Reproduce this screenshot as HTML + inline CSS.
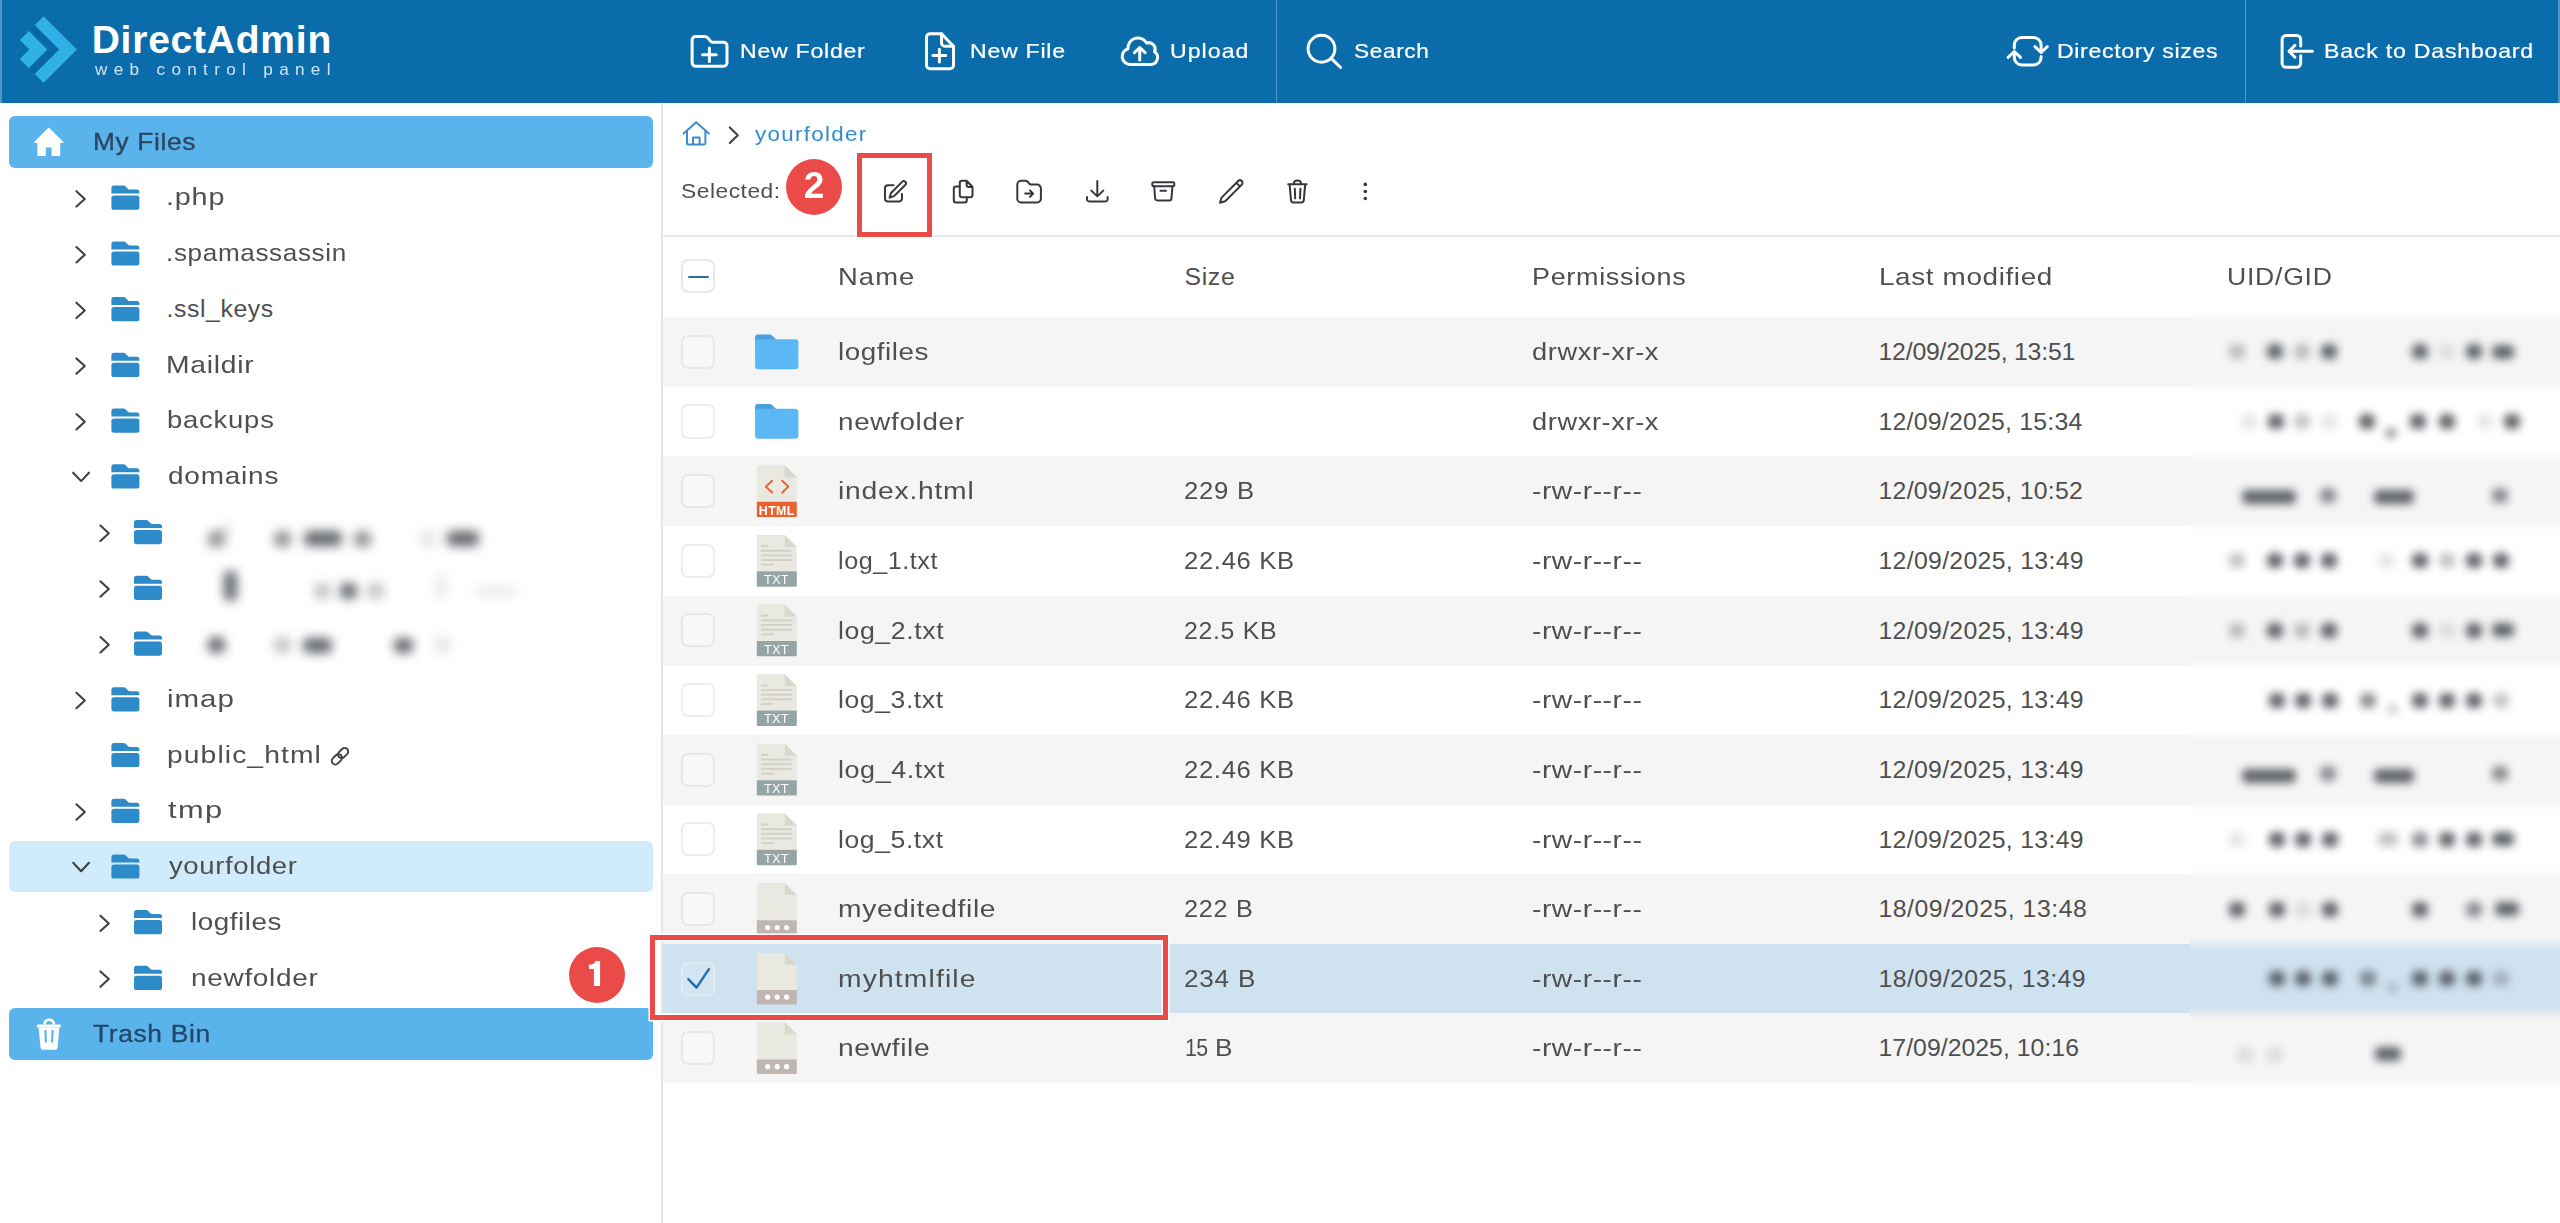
<!DOCTYPE html>
<html lang="en"><head><meta charset="utf-8"><title>DirectAdmin File Manager</title>
<style>
html,body{margin:0;padding:0;background:#fff;}
body{width:2560px;height:1223px;position:relative;overflow:hidden;font-family:"Liberation Sans",sans-serif;}
.t{position:absolute;white-space:pre;line-height:1;transform-origin:0 50%;font-family:"Liberation Sans",sans-serif;}
.b{position:absolute;}
svg.ov{position:absolute;left:0;top:0;width:2560px;height:1223px;overflow:visible;}
</style></head><body>
<div class="b" style="left:0.00px;top:0.00px;width:2560.00px;height:102.50px;background:#0b6cab;"></div>
<div class="b" style="left:0.00px;top:0.00px;width:2.00px;height:102.50px;background:#4d93c6;"></div>
<div class="b" style="left:2558.00px;top:0.00px;width:2.00px;height:102.50px;background:#4d93c6;"></div>
<div class="b" style="left:1275.50px;top:0.00px;width:1.60px;height:102.50px;background:#4f97cb;"></div>
<div class="b" style="left:2244.50px;top:0.00px;width:1.60px;height:102.50px;background:#4f97cb;"></div>
<span class="t" style="left:91.69px;top:20.00px;font-size:39px;color:#fff;letter-spacing:0.766px;font-weight:700;">DirectAdmin</span>
<span class="t" style="left:94.53px;top:61.00px;font-size:16.2px;color:#cfe4f4;letter-spacing:5.957px;transform:scaleX(1.0600);">web control panel</span>
<span class="t" style="left:739.90px;top:41.00px;font-size:20.3px;color:#fff;letter-spacing:0.640px;transform:scaleX(1.1400);-webkit-text-stroke:0.22px #fff;">New Folder</span>
<span class="t" style="left:969.90px;top:41.00px;font-size:20.3px;color:#fff;letter-spacing:0.641px;transform:scaleX(1.1400);-webkit-text-stroke:0.22px #fff;">New File</span>
<span class="t" style="left:1169.51px;top:41.00px;font-size:20.3px;color:#fff;letter-spacing:0.902px;transform:scaleX(1.1400);-webkit-text-stroke:0.22px #fff;">Upload</span>
<span class="t" style="left:1354.27px;top:41.00px;font-size:20.3px;color:#fff;letter-spacing:0.585px;transform:scaleX(1.1138);-webkit-text-stroke:0.22px #fff;">Search</span>
<span class="t" style="left:2057.10px;top:41.00px;font-size:20.3px;color:#fff;letter-spacing:0.558px;transform:scaleX(1.1400);-webkit-text-stroke:0.22px #fff;">Directory sizes</span>
<span class="t" style="left:2323.90px;top:41.00px;font-size:20.3px;color:#fff;letter-spacing:0.689px;transform:scaleX(1.1400);-webkit-text-stroke:0.22px #fff;">Back to Dashboard</span>
<div class="b" style="left:661.30px;top:102.50px;width:2.00px;height:1121.00px;background:#e4e5e6;"></div>
<div class="b" style="left:8.90px;top:116.20px;width:644.10px;height:51.60px;background:#5bb3ec;border-radius:6px;"></div>
<span class="t" style="left:92.84px;top:130.00px;font-size:24.3px;color:#2a4560;letter-spacing:0.590px;transform:scaleX(1.0839);-webkit-text-stroke:0.3px #2a4560;">My Files</span>
<div class="b" style="left:8.90px;top:840.70px;width:644.10px;height:51.60px;background:#d0ebfc;border-radius:6px;"></div>
<span class="t" style="left:166.17px;top:185.00px;font-size:24.8px;color:#4f4f4f;letter-spacing:0.706px;transform:scaleX(1.1597);">.php</span>
<span class="t" style="left:166.42px;top:241.00px;font-size:24.8px;color:#4f4f4f;letter-spacing:0.629px;transform:scaleX(1.0507);">.spamassassin</span>
<span class="t" style="left:166.53px;top:297.00px;font-size:24.8px;color:#4f4f4f;letter-spacing:0.582px;">.ssl_keys</span>
<span class="t" style="left:166.48px;top:353.00px;font-size:24.8px;color:#4f4f4f;letter-spacing:0.633px;transform:scaleX(1.1400);">Maildir</span>
<span class="t" style="left:167.03px;top:408.00px;font-size:24.8px;color:#4f4f4f;letter-spacing:0.706px;transform:scaleX(1.1061);">backups</span>
<span class="t" style="left:167.63px;top:464.00px;font-size:24.8px;color:#4f4f4f;letter-spacing:0.721px;transform:scaleX(1.1256);">domains</span>
<span class="t" style="left:166.83px;top:687.00px;font-size:24.8px;color:#4f4f4f;letter-spacing:0.802px;transform:scaleX(1.1897);">imap</span>
<span class="t" style="left:166.98px;top:743.00px;font-size:24.8px;color:#4f4f4f;letter-spacing:0.948px;transform:scaleX(1.1400);">public_html</span>
<span class="t" style="left:168.33px;top:798.00px;font-size:24.8px;color:#4f4f4f;letter-spacing:1.167px;transform:scaleX(1.2400);">tmp</span>
<span class="t" style="left:168.73px;top:854.00px;font-size:24.8px;color:#4f4f4f;letter-spacing:0.575px;transform:scaleX(1.1080);">yourfolder</span>
<span class="t" style="left:191.03px;top:910.00px;font-size:24.8px;color:#4f4f4f;letter-spacing:0.502px;transform:scaleX(1.1210);">logfiles</span>
<span class="t" style="left:191.04px;top:966.00px;font-size:24.8px;color:#4f4f4f;letter-spacing:0.621px;transform:scaleX(1.1273);">newfolder</span>
<div class="b" style="left:208.0px;top:530.6px;width:17.0px;height:16.0px;background:#4d5158;border-radius:5.8px;filter:blur(5.2px);opacity:0.64;"></div>
<div class="b" style="left:220.0px;top:523.6px;width:12.0px;height:12.0px;background:#4d5158;border-radius:4.3px;filter:blur(5.2px);opacity:0.14;"></div>
<div class="b" style="left:273.5px;top:530.6px;width:17.0px;height:16.0px;background:#4d5158;border-radius:5.8px;filter:blur(5.2px);opacity:0.64;"></div>
<div class="b" style="left:303.5px;top:531.1px;width:38.0px;height:15.0px;background:#4d5158;border-radius:5.4px;filter:blur(5.2px);opacity:0.88;"></div>
<div class="b" style="left:353.5px;top:530.6px;width:17.0px;height:16.0px;background:#4d5158;border-radius:5.8px;filter:blur(5.2px);opacity:0.64;"></div>
<div class="b" style="left:419.5px;top:530.6px;width:17.0px;height:16.0px;background:#4d5158;border-radius:5.8px;filter:blur(5.2px);opacity:0.14;"></div>
<div class="b" style="left:447.0px;top:531.1px;width:32.0px;height:15.0px;background:#4d5158;border-radius:5.4px;filter:blur(5.2px);opacity:0.88;"></div>
<div class="b" style="left:224.2px;top:571.3px;width:13.0px;height:30.0px;background:#4d5158;border-radius:4.7px;filter:blur(5.2px);opacity:0.88;"></div>
<div class="b" style="left:313.5px;top:583.3px;width:17.0px;height:16.0px;background:#4d5158;border-radius:5.8px;filter:blur(5.2px);opacity:0.34;"></div>
<div class="b" style="left:339.5px;top:583.3px;width:17.0px;height:16.0px;background:#4d5158;border-radius:5.8px;filter:blur(5.2px);opacity:0.88;"></div>
<div class="b" style="left:366.5px;top:583.3px;width:17.0px;height:16.0px;background:#4d5158;border-radius:5.8px;filter:blur(5.2px);opacity:0.34;"></div>
<div class="b" style="left:436.5px;top:574.3px;width:9.0px;height:24.0px;background:#4d5158;border-radius:3.2px;filter:blur(5.2px);opacity:0.14;"></div>
<div class="b" style="left:476.0px;top:587.3px;width:40.0px;height:8.0px;background:#4d5158;border-radius:2.9px;filter:blur(5.2px);opacity:0.14;"></div>
<div class="b" style="left:208.0px;top:637.1px;width:17.0px;height:16.0px;background:#4d5158;border-radius:5.8px;filter:blur(5.2px);opacity:0.88;"></div>
<div class="b" style="left:273.5px;top:637.1px;width:17.0px;height:16.0px;background:#4d5158;border-radius:5.8px;filter:blur(5.2px);opacity:0.34;"></div>
<div class="b" style="left:302.5px;top:637.6px;width:29.0px;height:15.0px;background:#4d5158;border-radius:5.4px;filter:blur(5.2px);opacity:0.88;"></div>
<div class="b" style="left:394.0px;top:637.6px;width:19.0px;height:15.0px;background:#4d5158;border-radius:5.4px;filter:blur(5.2px);opacity:0.88;"></div>
<div class="b" style="left:433.5px;top:637.1px;width:17.0px;height:16.0px;background:#4d5158;border-radius:5.8px;filter:blur(5.2px);opacity:0.14;"></div>
<div class="b" style="left:8.90px;top:1008.00px;width:644.10px;height:51.80px;background:#5bb3ec;border-radius:6px;"></div>
<span class="t" style="left:92.71px;top:1022.00px;font-size:24.6px;color:#23466b;letter-spacing:0.607px;transform:scaleX(1.0724);-webkit-text-stroke:0.3px #23466b;">Trash Bin</span>
<span class="t" style="left:755.25px;top:125.00px;font-size:19.6px;color:#2f8ccb;letter-spacing:1.147px;transform:scaleX(1.1400);">yourfolder</span>
<span class="t" style="left:680.77px;top:180.00px;font-size:21px;color:#4f4f4f;letter-spacing:0.499px;transform:scaleX(1.0826);">Selected:</span>
<div class="b" style="left:662.40px;top:235.20px;width:1898.00px;height:1.80px;background:#e6e7e8;"></div>
<span class="t" style="left:837.76px;top:265.00px;font-size:24.8px;color:#4f4f4f;letter-spacing:0.990px;transform:scaleX(1.1033);">Name</span>
<span class="t" style="left:1184.47px;top:265.00px;font-size:24.8px;color:#4f4f4f;letter-spacing:0.661px;">Size</span>
<span class="t" style="left:1531.79px;top:265.00px;font-size:24.8px;color:#4f4f4f;letter-spacing:0.623px;transform:scaleX(1.0878);">Permissions</span>
<span class="t" style="left:1878.52px;top:265.00px;font-size:24.8px;color:#4f4f4f;letter-spacing:0.565px;transform:scaleX(1.1231);">Last modified</span>
<span class="t" style="left:2226.55px;top:265.00px;font-size:24.8px;color:#4f4f4f;letter-spacing:0.711px;transform:scaleX(1.0711);">UID/GID</span>
<div class="b" style="left:663.30px;top:317.10px;width:1897.00px;height:69.93px;background:#f5f5f5;"></div>
<div class="b" style="left:681.3px;top:334.8px;width:34.2px;height:34.2px;border-radius:7px;box-sizing:border-box;background:rgba(255,255,255,0.35);border:2px solid rgba(0,0,0,0.07);"></div>
<span class="t" style="left:838.13px;top:340.00px;font-size:24.8px;color:#4f4f4f;letter-spacing:0.502px;transform:scaleX(1.1210);">logfiles</span>
<span class="t" style="left:1532.46px;top:340.00px;font-size:24.8px;color:#4f4f4f;letter-spacing:0.570px;transform:scaleX(1.0963);">drwxr-xr-x</span>
<span class="t" style="left:1878.51px;top:340.00px;font-size:24.8px;color:#4f4f4f;letter-spacing:-0.198px;">12/09/2025, 13:51</span>
<div class="b" style="left:681.3px;top:404.4px;width:34.2px;height:34.2px;border-radius:7px;box-sizing:border-box;background:rgba(255,255,255,0.35);border:2px solid rgba(0,0,0,0.07);"></div>
<span class="t" style="left:838.16px;top:410.00px;font-size:24.8px;color:#4f4f4f;letter-spacing:0.621px;transform:scaleX(1.1191);">newfolder</span>
<span class="t" style="left:1532.46px;top:410.00px;font-size:24.8px;color:#4f4f4f;letter-spacing:0.570px;transform:scaleX(1.0963);">drwxr-xr-x</span>
<span class="t" style="left:1878.51px;top:410.00px;font-size:24.8px;color:#4f4f4f;letter-spacing:0.241px;">12/09/2025, 15:34</span>
<div class="b" style="left:663.30px;top:456.36px;width:1897.00px;height:69.93px;background:#f5f5f5;"></div>
<div class="b" style="left:681.3px;top:474.1px;width:34.2px;height:34.2px;border-radius:7px;box-sizing:border-box;background:rgba(255,255,255,0.35);border:2px solid rgba(0,0,0,0.07);"></div>
<span class="t" style="left:838.11px;top:479.00px;font-size:24.8px;color:#4f4f4f;letter-spacing:0.666px;transform:scaleX(1.1400);">index.html</span>
<span class="t" style="left:1184.31px;top:479.00px;font-size:24.8px;color:#4f4f4f;letter-spacing:0.733px;transform:scaleX(1.0355);">229 B</span>
<span class="t" style="left:1532.35px;top:479.00px;font-size:24.8px;color:#4f4f4f;letter-spacing:0.471px;transform:scaleX(1.1382);">-rw-r--r--</span>
<span class="t" style="left:1878.51px;top:479.00px;font-size:24.8px;color:#4f4f4f;letter-spacing:0.273px;">12/09/2025, 10:52</span>
<div class="b" style="left:681.3px;top:543.7px;width:34.2px;height:34.2px;border-radius:7px;box-sizing:border-box;background:rgba(255,255,255,0.35);border:2px solid rgba(0,0,0,0.07);"></div>
<span class="t" style="left:838.31px;top:549.00px;font-size:24.8px;color:#4f4f4f;letter-spacing:0.541px;transform:scaleX(1.0143);">log_1.txt</span>
<span class="t" style="left:1184.31px;top:549.00px;font-size:24.8px;color:#4f4f4f;letter-spacing:0.670px;transform:scaleX(1.0320);">22.46 KB</span>
<span class="t" style="left:1532.35px;top:549.00px;font-size:24.8px;color:#4f4f4f;letter-spacing:0.471px;transform:scaleX(1.1382);">-rw-r--r--</span>
<span class="t" style="left:1878.51px;top:549.00px;font-size:24.8px;color:#4f4f4f;letter-spacing:0.319px;">12/09/2025, 13:49</span>
<div class="b" style="left:663.30px;top:595.62px;width:1897.00px;height:69.93px;background:#f5f5f5;"></div>
<div class="b" style="left:681.3px;top:613.3px;width:34.2px;height:34.2px;border-radius:7px;box-sizing:border-box;background:rgba(255,255,255,0.35);border:2px solid rgba(0,0,0,0.07);"></div>
<span class="t" style="left:838.20px;top:619.00px;font-size:24.8px;color:#4f4f4f;letter-spacing:0.541px;transform:scaleX(1.0766);">log_2.txt</span>
<span class="t" style="left:1184.35px;top:619.00px;font-size:24.8px;color:#4f4f4f;letter-spacing:0.673px;transform:scaleX(1.0031);">22.5 KB</span>
<span class="t" style="left:1532.35px;top:619.00px;font-size:24.8px;color:#4f4f4f;letter-spacing:0.471px;transform:scaleX(1.1382);">-rw-r--r--</span>
<span class="t" style="left:1878.51px;top:619.00px;font-size:24.8px;color:#4f4f4f;letter-spacing:0.319px;">12/09/2025, 13:49</span>
<div class="b" style="left:681.3px;top:683.0px;width:34.2px;height:34.2px;border-radius:7px;box-sizing:border-box;background:rgba(255,255,255,0.35);border:2px solid rgba(0,0,0,0.07);"></div>
<span class="t" style="left:838.21px;top:688.00px;font-size:24.8px;color:#4f4f4f;letter-spacing:0.541px;transform:scaleX(1.0714);">log_3.txt</span>
<span class="t" style="left:1184.31px;top:688.00px;font-size:24.8px;color:#4f4f4f;letter-spacing:0.670px;transform:scaleX(1.0320);">22.46 KB</span>
<span class="t" style="left:1532.35px;top:688.00px;font-size:24.8px;color:#4f4f4f;letter-spacing:0.471px;transform:scaleX(1.1382);">-rw-r--r--</span>
<span class="t" style="left:1878.51px;top:688.00px;font-size:24.8px;color:#4f4f4f;letter-spacing:0.319px;">12/09/2025, 13:49</span>
<div class="b" style="left:663.30px;top:734.88px;width:1897.00px;height:69.93px;background:#f5f5f5;"></div>
<div class="b" style="left:681.3px;top:752.6px;width:34.2px;height:34.2px;border-radius:7px;box-sizing:border-box;background:rgba(255,255,255,0.35);border:2px solid rgba(0,0,0,0.07);"></div>
<span class="t" style="left:838.19px;top:758.00px;font-size:24.8px;color:#4f4f4f;letter-spacing:0.541px;transform:scaleX(1.0849);">log_4.txt</span>
<span class="t" style="left:1184.31px;top:758.00px;font-size:24.8px;color:#4f4f4f;letter-spacing:0.670px;transform:scaleX(1.0320);">22.46 KB</span>
<span class="t" style="left:1532.35px;top:758.00px;font-size:24.8px;color:#4f4f4f;letter-spacing:0.471px;transform:scaleX(1.1382);">-rw-r--r--</span>
<span class="t" style="left:1878.51px;top:758.00px;font-size:24.8px;color:#4f4f4f;letter-spacing:0.319px;">12/09/2025, 13:49</span>
<div class="b" style="left:681.3px;top:822.2px;width:34.2px;height:34.2px;border-radius:7px;box-sizing:border-box;background:rgba(255,255,255,0.35);border:2px solid rgba(0,0,0,0.07);"></div>
<span class="t" style="left:838.21px;top:828.00px;font-size:24.8px;color:#4f4f4f;letter-spacing:0.541px;transform:scaleX(1.0714);">log_5.txt</span>
<span class="t" style="left:1184.31px;top:828.00px;font-size:24.8px;color:#4f4f4f;letter-spacing:0.670px;transform:scaleX(1.0320);">22.49 KB</span>
<span class="t" style="left:1532.35px;top:828.00px;font-size:24.8px;color:#4f4f4f;letter-spacing:0.471px;transform:scaleX(1.1382);">-rw-r--r--</span>
<span class="t" style="left:1878.51px;top:828.00px;font-size:24.8px;color:#4f4f4f;letter-spacing:0.319px;">12/09/2025, 13:49</span>
<div class="b" style="left:663.30px;top:874.14px;width:1897.00px;height:69.93px;background:#f5f5f5;"></div>
<div class="b" style="left:681.3px;top:891.9px;width:34.2px;height:34.2px;border-radius:7px;box-sizing:border-box;background:rgba(255,255,255,0.35);border:2px solid rgba(0,0,0,0.07);"></div>
<span class="t" style="left:838.13px;top:897.00px;font-size:24.8px;color:#4f4f4f;letter-spacing:0.555px;transform:scaleX(1.1379);">myeditedfile</span>
<span class="t" style="left:1184.33px;top:897.00px;font-size:24.8px;color:#4f4f4f;letter-spacing:0.733px;transform:scaleX(1.0155);">222 B</span>
<span class="t" style="left:1532.35px;top:897.00px;font-size:24.8px;color:#4f4f4f;letter-spacing:0.471px;transform:scaleX(1.1382);">-rw-r--r--</span>
<span class="t" style="left:1878.51px;top:897.00px;font-size:24.8px;color:#4f4f4f;letter-spacing:0.519px;">18/09/2025, 13:48</span>
<div class="b" style="left:663.30px;top:943.77px;width:1897.00px;height:69.93px;background:#cfe2f0;"></div>
<div class="b" style="left:681.3px;top:961.5px;width:34.2px;height:34.2px;border-radius:7px;box-sizing:border-box;background:rgba(255,255,255,0.10);border:2px solid rgba(255,255,255,0.28);"></div>
<span class="t" style="left:838.12px;top:967.00px;font-size:24.8px;color:#4f4f4f;letter-spacing:1.003px;transform:scaleX(1.1400);">myhtmlfile</span>
<span class="t" style="left:1184.29px;top:967.00px;font-size:24.8px;color:#4f4f4f;letter-spacing:0.733px;transform:scaleX(1.0539);">234 B</span>
<span class="t" style="left:1532.35px;top:967.00px;font-size:24.8px;color:#4f4f4f;letter-spacing:0.471px;transform:scaleX(1.1382);">-rw-r--r--</span>
<span class="t" style="left:1878.51px;top:967.00px;font-size:24.8px;color:#4f4f4f;letter-spacing:0.444px;">18/09/2025, 13:49</span>
<div class="b" style="left:663.30px;top:1013.40px;width:1897.00px;height:69.93px;background:#f5f5f5;"></div>
<div class="b" style="left:681.3px;top:1031.1px;width:34.2px;height:34.2px;border-radius:7px;box-sizing:border-box;background:rgba(255,255,255,0.35);border:2px solid rgba(0,0,0,0.07);"></div>
<span class="t" style="left:838.13px;top:1036.00px;font-size:24.8px;color:#4f4f4f;letter-spacing:0.585px;transform:scaleX(1.1365);">newfile</span>
<span class="t" style="left:1184.78px;top:1036.00px;font-size:24.8px;color:#4f4f4f;letter-spacing:-0.600px;transform:scaleX(0.8600);">15</span>
<span class="t" style="left:1215.44px;top:1036.00px;font-size:24.8px;color:#4f4f4f;transform:scaleX(1.0600);">B</span>
<span class="t" style="left:1532.35px;top:1036.00px;font-size:24.8px;color:#4f4f4f;letter-spacing:0.471px;transform:scaleX(1.1382);">-rw-r--r--</span>
<span class="t" style="left:1878.51px;top:1036.00px;font-size:24.8px;color:#4f4f4f;letter-spacing:0.032px;">17/09/2025, 10:16</span>
<div class="b" style="left:681.3px;top:259.0px;width:34.2px;height:34.2px;border-radius:7px;box-sizing:border-box;background:#fff;border:2px solid #e6e9eb;"></div>
<div class="b" style="left:687.80px;top:275.60px;width:21.60px;height:2.90px;background:#2a6f9f;border-radius:1.4px;"></div>
<div class="b" style="left:2190px;top:300px;width:370px;height:810px;overflow:hidden;"><div class="b" style="left:0;top:0;width:370px;height:810px;filter:blur(4.5px);"><div class="b" style="left:-40px;top:-22.90px;width:460px;height:40.00px;background:#fff;"></div><div class="b" style="left:-40px;top:17.10px;width:460px;height:69.93px;background:#f5f5f5;"></div><div class="b" style="left:-40px;top:86.73px;width:460px;height:69.93px;background:#fff;"></div><div class="b" style="left:-40px;top:156.36px;width:460px;height:69.93px;background:#f5f5f5;"></div><div class="b" style="left:-40px;top:225.99px;width:460px;height:69.93px;background:#fff;"></div><div class="b" style="left:-40px;top:295.62px;width:460px;height:69.93px;background:#f5f5f5;"></div><div class="b" style="left:-40px;top:365.25px;width:460px;height:69.93px;background:#fff;"></div><div class="b" style="left:-40px;top:434.88px;width:460px;height:69.93px;background:#f5f5f5;"></div><div class="b" style="left:-40px;top:504.51px;width:460px;height:69.93px;background:#fff;"></div><div class="b" style="left:-40px;top:574.14px;width:460px;height:69.93px;background:#f5f5f5;"></div><div class="b" style="left:-40px;top:643.77px;width:460px;height:69.93px;background:#cfe2f0;"></div><div class="b" style="left:-40px;top:713.40px;width:460px;height:69.93px;background:#f5f5f5;"></div><div class="b" style="left:-40px;top:783.03px;width:460px;height:40.00px;background:#fff;"></div></div></div>
<div class="b" style="left:2228.5px;top:344.4px;width:16.0px;height:15.0px;background:#4d5158;border-radius:5.4px;filter:blur(4.3px);opacity:0.34;"></div>
<div class="b" style="left:2267.0px;top:344.4px;width:16.0px;height:15.0px;background:#4d5158;border-radius:5.4px;filter:blur(4.3px);opacity:0.88;"></div>
<div class="b" style="left:2294.0px;top:344.4px;width:16.0px;height:15.0px;background:#4d5158;border-radius:5.4px;filter:blur(4.3px);opacity:0.34;"></div>
<div class="b" style="left:2321.0px;top:344.4px;width:16.0px;height:15.0px;background:#4d5158;border-radius:5.4px;filter:blur(4.3px);opacity:0.88;"></div>
<div class="b" style="left:2412.0px;top:344.4px;width:16.0px;height:15.0px;background:#4d5158;border-radius:5.4px;filter:blur(4.3px);opacity:0.88;"></div>
<div class="b" style="left:2439.0px;top:344.4px;width:16.0px;height:15.0px;background:#4d5158;border-radius:5.4px;filter:blur(4.3px);opacity:0.14;"></div>
<div class="b" style="left:2466.0px;top:344.4px;width:16.0px;height:15.0px;background:#4d5158;border-radius:5.4px;filter:blur(4.3px);opacity:0.88;"></div>
<div class="b" style="left:2492.0px;top:344.9px;width:22.0px;height:14.0px;background:#4d5158;border-radius:5.0px;filter:blur(4.3px);opacity:0.88;"></div>
<div class="b" style="left:2241.0px;top:414.0px;width:16.0px;height:15.0px;background:#4d5158;border-radius:5.4px;filter:blur(4.3px);opacity:0.14;"></div>
<div class="b" style="left:2268.0px;top:414.0px;width:16.0px;height:15.0px;background:#4d5158;border-radius:5.4px;filter:blur(4.3px);opacity:0.88;"></div>
<div class="b" style="left:2294.0px;top:414.0px;width:16.0px;height:15.0px;background:#4d5158;border-radius:5.4px;filter:blur(4.3px);opacity:0.34;"></div>
<div class="b" style="left:2321.0px;top:414.0px;width:16.0px;height:15.0px;background:#4d5158;border-radius:5.4px;filter:blur(4.3px);opacity:0.14;"></div>
<div class="b" style="left:2359.0px;top:414.0px;width:16.0px;height:15.0px;background:#4d5158;border-radius:5.4px;filter:blur(4.3px);opacity:0.88;"></div>
<div class="b" style="left:2386.0px;top:427.5px;width:10.0px;height:10.0px;background:#4d5158;border-radius:3.6px;filter:blur(4.3px);opacity:0.64;"></div>
<div class="b" style="left:2410.0px;top:414.0px;width:16.0px;height:15.0px;background:#4d5158;border-radius:5.4px;filter:blur(4.3px);opacity:0.88;"></div>
<div class="b" style="left:2439.0px;top:414.0px;width:16.0px;height:15.0px;background:#4d5158;border-radius:5.4px;filter:blur(4.3px);opacity:0.88;"></div>
<div class="b" style="left:2477.0px;top:414.0px;width:16.0px;height:15.0px;background:#4d5158;border-radius:5.4px;filter:blur(4.3px);opacity:0.14;"></div>
<div class="b" style="left:2504.0px;top:414.0px;width:16.0px;height:15.0px;background:#4d5158;border-radius:5.4px;filter:blur(4.3px);opacity:0.88;"></div>
<div class="b" style="left:2242.0px;top:490.2px;width:54.0px;height:14.0px;background:#4d5158;border-radius:5.0px;filter:blur(4.3px);opacity:0.88;"></div>
<div class="b" style="left:2319.5px;top:487.7px;width:16.0px;height:15.0px;background:#4d5158;border-radius:5.4px;filter:blur(4.3px);opacity:0.64;"></div>
<div class="b" style="left:2373.5px;top:490.2px;width:40.0px;height:14.0px;background:#4d5158;border-radius:5.0px;filter:blur(4.3px);opacity:0.88;"></div>
<div class="b" style="left:2492.0px;top:487.7px;width:16.0px;height:15.0px;background:#4d5158;border-radius:5.4px;filter:blur(4.3px);opacity:0.64;"></div>
<div class="b" style="left:2228.5px;top:553.3px;width:16.0px;height:15.0px;background:#4d5158;border-radius:5.4px;filter:blur(4.3px);opacity:0.34;"></div>
<div class="b" style="left:2267.0px;top:553.3px;width:16.0px;height:15.0px;background:#4d5158;border-radius:5.4px;filter:blur(4.3px);opacity:0.88;"></div>
<div class="b" style="left:2294.0px;top:553.3px;width:16.0px;height:15.0px;background:#4d5158;border-radius:5.4px;filter:blur(4.3px);opacity:0.88;"></div>
<div class="b" style="left:2321.0px;top:553.3px;width:16.0px;height:15.0px;background:#4d5158;border-radius:5.4px;filter:blur(4.3px);opacity:0.88;"></div>
<div class="b" style="left:2378.0px;top:553.3px;width:16.0px;height:15.0px;background:#4d5158;border-radius:5.4px;filter:blur(4.3px);opacity:0.14;"></div>
<div class="b" style="left:2412.0px;top:553.3px;width:16.0px;height:15.0px;background:#4d5158;border-radius:5.4px;filter:blur(4.3px);opacity:0.88;"></div>
<div class="b" style="left:2439.0px;top:553.3px;width:16.0px;height:15.0px;background:#4d5158;border-radius:5.4px;filter:blur(4.3px);opacity:0.34;"></div>
<div class="b" style="left:2466.0px;top:553.3px;width:16.0px;height:15.0px;background:#4d5158;border-radius:5.4px;filter:blur(4.3px);opacity:0.88;"></div>
<div class="b" style="left:2493.0px;top:553.3px;width:16.0px;height:15.0px;background:#4d5158;border-radius:5.4px;filter:blur(4.3px);opacity:0.88;"></div>
<div class="b" style="left:2228.5px;top:622.9px;width:16.0px;height:15.0px;background:#4d5158;border-radius:5.4px;filter:blur(4.3px);opacity:0.34;"></div>
<div class="b" style="left:2267.0px;top:622.9px;width:16.0px;height:15.0px;background:#4d5158;border-radius:5.4px;filter:blur(4.3px);opacity:0.88;"></div>
<div class="b" style="left:2294.0px;top:622.9px;width:16.0px;height:15.0px;background:#4d5158;border-radius:5.4px;filter:blur(4.3px);opacity:0.34;"></div>
<div class="b" style="left:2321.0px;top:622.9px;width:16.0px;height:15.0px;background:#4d5158;border-radius:5.4px;filter:blur(4.3px);opacity:0.88;"></div>
<div class="b" style="left:2412.0px;top:622.9px;width:16.0px;height:15.0px;background:#4d5158;border-radius:5.4px;filter:blur(4.3px);opacity:0.88;"></div>
<div class="b" style="left:2439.0px;top:622.9px;width:16.0px;height:15.0px;background:#4d5158;border-radius:5.4px;filter:blur(4.3px);opacity:0.14;"></div>
<div class="b" style="left:2466.0px;top:622.9px;width:16.0px;height:15.0px;background:#4d5158;border-radius:5.4px;filter:blur(4.3px);opacity:0.88;"></div>
<div class="b" style="left:2492.0px;top:623.4px;width:22.0px;height:14.0px;background:#4d5158;border-radius:5.0px;filter:blur(4.3px);opacity:0.88;"></div>
<div class="b" style="left:2269.0px;top:692.6px;width:16.0px;height:15.0px;background:#4d5158;border-radius:5.4px;filter:blur(4.3px);opacity:0.88;"></div>
<div class="b" style="left:2295.0px;top:692.6px;width:16.0px;height:15.0px;background:#4d5158;border-radius:5.4px;filter:blur(4.3px);opacity:0.88;"></div>
<div class="b" style="left:2322.0px;top:692.6px;width:16.0px;height:15.0px;background:#4d5158;border-radius:5.4px;filter:blur(4.3px);opacity:0.88;"></div>
<div class="b" style="left:2360.0px;top:692.6px;width:16.0px;height:15.0px;background:#4d5158;border-radius:5.4px;filter:blur(4.3px);opacity:0.64;"></div>
<div class="b" style="left:2387.5px;top:704.6px;width:9.0px;height:9.0px;background:#4d5158;border-radius:3.2px;filter:blur(4.3px);opacity:0.34;"></div>
<div class="b" style="left:2412.0px;top:692.6px;width:16.0px;height:15.0px;background:#4d5158;border-radius:5.4px;filter:blur(4.3px);opacity:0.88;"></div>
<div class="b" style="left:2439.0px;top:692.6px;width:16.0px;height:15.0px;background:#4d5158;border-radius:5.4px;filter:blur(4.3px);opacity:0.88;"></div>
<div class="b" style="left:2466.0px;top:692.6px;width:16.0px;height:15.0px;background:#4d5158;border-radius:5.4px;filter:blur(4.3px);opacity:0.88;"></div>
<div class="b" style="left:2493.0px;top:692.6px;width:16.0px;height:15.0px;background:#4d5158;border-radius:5.4px;filter:blur(4.3px);opacity:0.34;"></div>
<div class="b" style="left:2242.0px;top:768.7px;width:54.0px;height:14.0px;background:#4d5158;border-radius:5.0px;filter:blur(4.3px);opacity:0.88;"></div>
<div class="b" style="left:2319.5px;top:766.2px;width:16.0px;height:15.0px;background:#4d5158;border-radius:5.4px;filter:blur(4.3px);opacity:0.64;"></div>
<div class="b" style="left:2373.5px;top:768.7px;width:40.0px;height:14.0px;background:#4d5158;border-radius:5.0px;filter:blur(4.3px);opacity:0.88;"></div>
<div class="b" style="left:2492.0px;top:766.2px;width:16.0px;height:15.0px;background:#4d5158;border-radius:5.4px;filter:blur(4.3px);opacity:0.64;"></div>
<div class="b" style="left:2229.0px;top:831.8px;width:16.0px;height:15.0px;background:#4d5158;border-radius:5.4px;filter:blur(4.3px);opacity:0.14;"></div>
<div class="b" style="left:2269.0px;top:831.8px;width:16.0px;height:15.0px;background:#4d5158;border-radius:5.4px;filter:blur(4.3px);opacity:0.88;"></div>
<div class="b" style="left:2295.0px;top:831.8px;width:16.0px;height:15.0px;background:#4d5158;border-radius:5.4px;filter:blur(4.3px);opacity:0.88;"></div>
<div class="b" style="left:2322.0px;top:831.8px;width:16.0px;height:15.0px;background:#4d5158;border-radius:5.4px;filter:blur(4.3px);opacity:0.88;"></div>
<div class="b" style="left:2378.0px;top:832.3px;width:20.0px;height:14.0px;background:#4d5158;border-radius:5.0px;filter:blur(4.3px);opacity:0.34;"></div>
<div class="b" style="left:2412.0px;top:831.8px;width:16.0px;height:15.0px;background:#4d5158;border-radius:5.4px;filter:blur(4.3px);opacity:0.64;"></div>
<div class="b" style="left:2439.0px;top:831.8px;width:16.0px;height:15.0px;background:#4d5158;border-radius:5.4px;filter:blur(4.3px);opacity:0.88;"></div>
<div class="b" style="left:2466.0px;top:831.8px;width:16.0px;height:15.0px;background:#4d5158;border-radius:5.4px;filter:blur(4.3px);opacity:0.88;"></div>
<div class="b" style="left:2492.0px;top:832.3px;width:22.0px;height:14.0px;background:#4d5158;border-radius:5.0px;filter:blur(4.3px);opacity:0.88;"></div>
<div class="b" style="left:2229.0px;top:901.5px;width:16.0px;height:15.0px;background:#4d5158;border-radius:5.4px;filter:blur(4.3px);opacity:0.88;"></div>
<div class="b" style="left:2269.0px;top:901.5px;width:16.0px;height:15.0px;background:#4d5158;border-radius:5.4px;filter:blur(4.3px);opacity:0.88;"></div>
<div class="b" style="left:2295.0px;top:901.5px;width:16.0px;height:15.0px;background:#4d5158;border-radius:5.4px;filter:blur(4.3px);opacity:0.14;"></div>
<div class="b" style="left:2322.0px;top:901.5px;width:16.0px;height:15.0px;background:#4d5158;border-radius:5.4px;filter:blur(4.3px);opacity:0.88;"></div>
<div class="b" style="left:2412.0px;top:901.5px;width:16.0px;height:15.0px;background:#4d5158;border-radius:5.4px;filter:blur(4.3px);opacity:0.88;"></div>
<div class="b" style="left:2466.0px;top:901.5px;width:16.0px;height:15.0px;background:#4d5158;border-radius:5.4px;filter:blur(4.3px);opacity:0.64;"></div>
<div class="b" style="left:2495.0px;top:902.0px;width:24.0px;height:14.0px;background:#4d5158;border-radius:5.0px;filter:blur(4.3px);opacity:0.88;"></div>
<div class="b" style="left:2269.0px;top:971.1px;width:16.0px;height:15.0px;background:#4d5158;border-radius:5.4px;filter:blur(4.3px);opacity:0.88;"></div>
<div class="b" style="left:2295.0px;top:971.1px;width:16.0px;height:15.0px;background:#4d5158;border-radius:5.4px;filter:blur(4.3px);opacity:0.88;"></div>
<div class="b" style="left:2322.0px;top:971.1px;width:16.0px;height:15.0px;background:#4d5158;border-radius:5.4px;filter:blur(4.3px);opacity:0.88;"></div>
<div class="b" style="left:2360.0px;top:971.1px;width:16.0px;height:15.0px;background:#4d5158;border-radius:5.4px;filter:blur(4.3px);opacity:0.64;"></div>
<div class="b" style="left:2387.5px;top:983.1px;width:9.0px;height:9.0px;background:#4d5158;border-radius:3.2px;filter:blur(4.3px);opacity:0.34;"></div>
<div class="b" style="left:2412.0px;top:971.1px;width:16.0px;height:15.0px;background:#4d5158;border-radius:5.4px;filter:blur(4.3px);opacity:0.88;"></div>
<div class="b" style="left:2439.0px;top:971.1px;width:16.0px;height:15.0px;background:#4d5158;border-radius:5.4px;filter:blur(4.3px);opacity:0.88;"></div>
<div class="b" style="left:2466.0px;top:971.1px;width:16.0px;height:15.0px;background:#4d5158;border-radius:5.4px;filter:blur(4.3px);opacity:0.88;"></div>
<div class="b" style="left:2493.0px;top:971.1px;width:16.0px;height:15.0px;background:#4d5158;border-radius:5.4px;filter:blur(4.3px);opacity:0.34;"></div>
<div class="b" style="left:2237.0px;top:1046.7px;width:16.0px;height:15.0px;background:#4d5158;border-radius:5.4px;filter:blur(4.3px);opacity:0.14;"></div>
<div class="b" style="left:2267.0px;top:1046.7px;width:16.0px;height:15.0px;background:#4d5158;border-radius:5.4px;filter:blur(4.3px);opacity:0.14;"></div>
<div class="b" style="left:2375.0px;top:1047.2px;width:26.0px;height:14.0px;background:#4d5158;border-radius:5.0px;filter:blur(4.3px);opacity:0.88;"></div>
<svg class="ov" viewBox="0 0 2560 1223"><polygon points="43.6,16.2 76.9,49.5 43.6,82.8 34.6,73.8 58.9,49.5 34.6,25.2" fill="#2fb0e7"/>
<polygon points="34.6,25.2 58.9,49.5 34.6,73.8 30.5,69.7 50.7,49.5 30.5,29.3" fill="#0b66a5"/>
<polygon points="28.8,31 47.3,49.5 28.8,68 19.8,59 29.3,49.5 19.8,40" fill="#2fb0e7"/>
<path fill="none" stroke="#fff" stroke-width="3" stroke-linecap="round" stroke-linejoin="round" d="M692.1,40 a3.5,3.5 0 0 1 3.5,-3.5 h9.2 a4,4 0 0 1 3,1.4 l2.6,3 a4,4 0 0 0 3,1.4 h10.1 a3.5,3.5 0 0 1 3.5,3.5 v17 a3.5,3.5 0 0 1 -3.5,3.5 h-27.9 a3.5,3.5 0 0 1 -3.5,-3.5 z"/>
<path fill="none" stroke="#fff" stroke-width="3" stroke-linecap="round" stroke-linejoin="round" d="M702.6,54.8 h13.6 M709.4,48 v13.6"/>
<path fill="none" stroke="#fff" stroke-width="3" stroke-linecap="round" stroke-linejoin="round" d="M926.5,37.3 a3.5,3.5 0 0 1 3.5,-3.5 h11.5 l12,12.5 v19 a3.5,3.5 0 0 1 -3.5,3.5 h-20 a3.5,3.5 0 0 1 -3.5,-3.5 z"/>
<path fill="none" stroke="#fff" stroke-width="3" stroke-linecap="round" stroke-linejoin="round" d="M941.5,33.8 v9 a3.5,3.5 0 0 0 3.5,3.5 h8.5"/>
<path fill="none" stroke="#fff" stroke-width="3" stroke-linecap="round" stroke-linejoin="round" d="M933,55.6 h12.8 M939.4,49.2 v12.8"/>
<path fill="none" stroke="#fff" stroke-width="3" stroke-linecap="round" stroke-linejoin="round" d="M1130,64.5 A8,8 0 0 1 1128,48.8 A10,10 0 0 1 1146.66,43 A6.5,6.5 0 0 1 1154.6,51.8 A7,7 0 0 1 1150.5,64.5 Z"/>
<path fill="none" stroke="#fff" stroke-width="3" stroke-linecap="round" stroke-linejoin="round" d="M1139.75,60 V48 M1134.4,52.6 l5.35,-5.1 l5.35,5.1"/>
<circle fill="none" stroke="#fff" stroke-width="3" stroke-linecap="round" stroke-linejoin="round" cx="1321.5" cy="48.75" r="13.4"/>
<path fill="none" stroke="#fff" stroke-width="3" stroke-linecap="round" stroke-linejoin="round" d="M1331.2,58.4 L1340.6,67.5"/>
<path fill="none" stroke="#fff" stroke-width="3" stroke-linecap="round" stroke-linejoin="round" d="M2014.3,48 v-3 a7.5,7.5 0 0 1 7.5,-7.5 h11.8 a7.5,7.5 0 0 1 7.5,7.5 v7"/>
<path fill="none" stroke="#fff" stroke-width="3" stroke-linecap="round" stroke-linejoin="round" d="M2034.9,46.6 l6.2,5.9 l6.2,-5.9"/>
<path fill="none" stroke="#fff" stroke-width="3" stroke-linecap="round" stroke-linejoin="round" d="M2041.1,56.5 v1 a7.5,7.5 0 0 1 -7.5,7.5 h-11.8 a7.5,7.5 0 0 1 -7.5,-7.5 v-5.5"/>
<path fill="none" stroke="#fff" stroke-width="3" stroke-linecap="round" stroke-linejoin="round" d="M2008.1,57.4 l6.2,-5.9 l6.2,5.9"/>
<path fill="none" stroke="#fff" stroke-width="3" stroke-linecap="round" stroke-linejoin="round" d="M2300.7,46 v-6.5 a4,4 0 0 0 -4,-4 h-10.6 a4,4 0 0 0 -4,4 v23.8 a4,4 0 0 0 4,4 h10.6 a4,4 0 0 0 4,-4 v-7.5"/>
<path fill="none" stroke="#fff" stroke-width="3" stroke-linecap="round" stroke-linejoin="round" d="M2312.5,51.3 h-23 M2295,45.3 l-6,6 l6,6"/>
<path fill="#fff" stroke="#fff" stroke-width="1.6" stroke-linejoin="round" d="M48.7,128.6 L62.6,142.3 H59.4 V155.3 H52.4 V146.8 H45 V155.3 H38.2 V142.3 H35 Z"/>
<path fill="none" stroke="#3f4144" stroke-width="2.1" stroke-linecap="round" stroke-linejoin="round" d="M76.4,191.2 l8.4,7.7 l-8.4,7.7"/>
<path fill="#2e8bc9" d="M111.4,188.1 a2.5,2.5 0 0 1 2.5,-2.5 h9.6 a3,3 0 0 1 2.1,0.9 l2.2,2.2 a3,3 0 0 0 2.1,0.9 h7 a2.5,2.5 0 0 1 2.5,2.5 v1.5 h-28 z"/>
<rect fill="#2e8bc9" x="111.4" y="195.6" width="28" height="14.2" rx="2.6"/>
<path fill="none" stroke="#3f4144" stroke-width="2.1" stroke-linecap="round" stroke-linejoin="round" d="M76.4,247.0 l8.4,7.7 l-8.4,7.7"/>
<path fill="#2e8bc9" d="M111.4,243.9 a2.5,2.5 0 0 1 2.5,-2.5 h9.6 a3,3 0 0 1 2.1,0.9 l2.2,2.2 a3,3 0 0 0 2.1,0.9 h7 a2.5,2.5 0 0 1 2.5,2.5 v1.5 h-28 z"/>
<rect fill="#2e8bc9" x="111.4" y="251.4" width="28" height="14.2" rx="2.6"/>
<path fill="none" stroke="#3f4144" stroke-width="2.1" stroke-linecap="round" stroke-linejoin="round" d="M76.4,302.7 l8.4,7.7 l-8.4,7.7"/>
<path fill="#2e8bc9" d="M111.4,299.6 a2.5,2.5 0 0 1 2.5,-2.5 h9.6 a3,3 0 0 1 2.1,0.9 l2.2,2.2 a3,3 0 0 0 2.1,0.9 h7 a2.5,2.5 0 0 1 2.5,2.5 v1.5 h-28 z"/>
<rect fill="#2e8bc9" x="111.4" y="307.1" width="28" height="14.2" rx="2.6"/>
<path fill="none" stroke="#3f4144" stroke-width="2.1" stroke-linecap="round" stroke-linejoin="round" d="M76.4,358.4 l8.4,7.7 l-8.4,7.7"/>
<path fill="#2e8bc9" d="M111.4,355.3 a2.5,2.5 0 0 1 2.5,-2.5 h9.6 a3,3 0 0 1 2.1,0.9 l2.2,2.2 a3,3 0 0 0 2.1,0.9 h7 a2.5,2.5 0 0 1 2.5,2.5 v1.5 h-28 z"/>
<rect fill="#2e8bc9" x="111.4" y="362.8" width="28" height="14.2" rx="2.6"/>
<path fill="none" stroke="#3f4144" stroke-width="2.1" stroke-linecap="round" stroke-linejoin="round" d="M76.4,414.1 l8.4,7.7 l-8.4,7.7"/>
<path fill="#2e8bc9" d="M111.4,411.0 a2.5,2.5 0 0 1 2.5,-2.5 h9.6 a3,3 0 0 1 2.1,0.9 l2.2,2.2 a3,3 0 0 0 2.1,0.9 h7 a2.5,2.5 0 0 1 2.5,2.5 v1.5 h-28 z"/>
<rect fill="#2e8bc9" x="111.4" y="418.5" width="28" height="14.2" rx="2.6"/>
<path fill="none" stroke="#3f4144" stroke-width="2.1" stroke-linecap="round" stroke-linejoin="round" d="M73.2,472.7 l7.9,8.4 l7.9,-8.4"/>
<path fill="#2e8bc9" d="M111.4,466.8 a2.5,2.5 0 0 1 2.5,-2.5 h9.6 a3,3 0 0 1 2.1,0.9 l2.2,2.2 a3,3 0 0 0 2.1,0.9 h7 a2.5,2.5 0 0 1 2.5,2.5 v1.5 h-28 z"/>
<rect fill="#2e8bc9" x="111.4" y="474.3" width="28" height="14.2" rx="2.6"/>
<path fill="none" stroke="#3f4144" stroke-width="2.1" stroke-linecap="round" stroke-linejoin="round" d="M100.4,525.6 l8.4,7.7 l-8.4,7.7"/>
<path fill="#2e8bc9" d="M134.0,522.5 a2.5,2.5 0 0 1 2.5,-2.5 h9.6 a3,3 0 0 1 2.1,0.9 l2.2,2.2 a3,3 0 0 0 2.1,0.9 h7 a2.5,2.5 0 0 1 2.5,2.5 v1.5 h-28 z"/>
<rect fill="#2e8bc9" x="134.0" y="530.0" width="28" height="14.2" rx="2.6"/>
<path fill="none" stroke="#3f4144" stroke-width="2.1" stroke-linecap="round" stroke-linejoin="round" d="M100.4,581.3 l8.4,7.7 l-8.4,7.7"/>
<path fill="#2e8bc9" d="M134.0,578.2 a2.5,2.5 0 0 1 2.5,-2.5 h9.6 a3,3 0 0 1 2.1,0.9 l2.2,2.2 a3,3 0 0 0 2.1,0.9 h7 a2.5,2.5 0 0 1 2.5,2.5 v1.5 h-28 z"/>
<rect fill="#2e8bc9" x="134.0" y="585.7" width="28" height="14.2" rx="2.6"/>
<path fill="none" stroke="#3f4144" stroke-width="2.1" stroke-linecap="round" stroke-linejoin="round" d="M100.4,637.1 l8.4,7.7 l-8.4,7.7"/>
<path fill="#2e8bc9" d="M134.0,634.0 a2.5,2.5 0 0 1 2.5,-2.5 h9.6 a3,3 0 0 1 2.1,0.9 l2.2,2.2 a3,3 0 0 0 2.1,0.9 h7 a2.5,2.5 0 0 1 2.5,2.5 v1.5 h-28 z"/>
<rect fill="#2e8bc9" x="134.0" y="641.5" width="28" height="14.2" rx="2.6"/>
<path fill="none" stroke="#3f4144" stroke-width="2.1" stroke-linecap="round" stroke-linejoin="round" d="M76.4,692.8 l8.4,7.7 l-8.4,7.7"/>
<path fill="#2e8bc9" d="M111.4,689.7 a2.5,2.5 0 0 1 2.5,-2.5 h9.6 a3,3 0 0 1 2.1,0.9 l2.2,2.2 a3,3 0 0 0 2.1,0.9 h7 a2.5,2.5 0 0 1 2.5,2.5 v1.5 h-28 z"/>
<rect fill="#2e8bc9" x="111.4" y="697.2" width="28" height="14.2" rx="2.6"/>
<path fill="#2e8bc9" d="M111.4,745.4 a2.5,2.5 0 0 1 2.5,-2.5 h9.6 a3,3 0 0 1 2.1,0.9 l2.2,2.2 a3,3 0 0 0 2.1,0.9 h7 a2.5,2.5 0 0 1 2.5,2.5 v1.5 h-28 z"/>
<rect fill="#2e8bc9" x="111.4" y="752.9" width="28" height="14.2" rx="2.6"/>
<path fill="none" stroke="#3f4144" stroke-width="2.1" stroke-linecap="round" stroke-linejoin="round" d="M76.4,804.3 l8.4,7.7 l-8.4,7.7"/>
<path fill="#2e8bc9" d="M111.4,801.2 a2.5,2.5 0 0 1 2.5,-2.5 h9.6 a3,3 0 0 1 2.1,0.9 l2.2,2.2 a3,3 0 0 0 2.1,0.9 h7 a2.5,2.5 0 0 1 2.5,2.5 v1.5 h-28 z"/>
<rect fill="#2e8bc9" x="111.4" y="808.7" width="28" height="14.2" rx="2.6"/>
<path fill="none" stroke="#3f4144" stroke-width="2.1" stroke-linecap="round" stroke-linejoin="round" d="M73.2,862.8 l7.9,8.4 l7.9,-8.4"/>
<path fill="#2e8bc9" d="M111.4,856.9 a2.5,2.5 0 0 1 2.5,-2.5 h9.6 a3,3 0 0 1 2.1,0.9 l2.2,2.2 a3,3 0 0 0 2.1,0.9 h7 a2.5,2.5 0 0 1 2.5,2.5 v1.5 h-28 z"/>
<rect fill="#2e8bc9" x="111.4" y="864.4" width="28" height="14.2" rx="2.6"/>
<path fill="none" stroke="#3f4144" stroke-width="2.1" stroke-linecap="round" stroke-linejoin="round" d="M100.4,915.7 l8.4,7.7 l-8.4,7.7"/>
<path fill="#2e8bc9" d="M134.0,912.6 a2.5,2.5 0 0 1 2.5,-2.5 h9.6 a3,3 0 0 1 2.1,0.9 l2.2,2.2 a3,3 0 0 0 2.1,0.9 h7 a2.5,2.5 0 0 1 2.5,2.5 v1.5 h-28 z"/>
<rect fill="#2e8bc9" x="134.0" y="920.1" width="28" height="14.2" rx="2.6"/>
<path fill="none" stroke="#3f4144" stroke-width="2.1" stroke-linecap="round" stroke-linejoin="round" d="M100.4,971.4 l8.4,7.7 l-8.4,7.7"/>
<path fill="#2e8bc9" d="M134.0,968.3 a2.5,2.5 0 0 1 2.5,-2.5 h9.6 a3,3 0 0 1 2.1,0.9 l2.2,2.2 a3,3 0 0 0 2.1,0.9 h7 a2.5,2.5 0 0 1 2.5,2.5 v1.5 h-28 z"/>
<rect fill="#2e8bc9" x="134.0" y="975.8" width="28" height="14.2" rx="2.6"/>
<g transform="translate(340,756.2) rotate(-45)" fill="none" stroke="#3f4144" stroke-width="1.9" stroke-linecap="round" stroke-linejoin="round"><rect x="-10.2" y="-3.6" width="11.6" height="7.2" rx="3.6"/><rect x="-1.4" y="-3.6" width="11.6" height="7.2" rx="3.6"/></g>
<path fill="#fff" d="M43,1024.6 c0.6,-4 2.6,-6.2 6.2,-6.2 c3.6,0 5.6,2.2 6.2,6.2 h-2.6 c-0.5,-2.5 -1.6,-3.7 -3.6,-3.7 c-2,0 -3.1,1.2 -3.6,3.7 z"/>
<rect fill="#fff" x="36.8" y="1024.4" width="24" height="3.2" rx="1.2"/>
<path fill="#fff" fill-rule="evenodd" d="M38.6,1027.4 h20.8 l-1.9,20.2 a2.4,2.4 0 0 1 -2.4,2.2 h-12.2 a2.4,2.4 0 0 1 -2.4,-2.2 z M44.3,1030 l0.6,12.6 h2 l-0.4,-12.6 z M51.5,1030 l-0.4,12.6 h2 l0.6,-12.6 z"/>
<path fill="none" stroke="#3c8fca" stroke-width="2" stroke-linecap="round" stroke-linejoin="round" d="M683.6,133.6 L696.2,122.2 L708.8,133.6"/>
<path fill="none" stroke="#3c8fca" stroke-width="2" stroke-linecap="round" stroke-linejoin="round" d="M687,131 V143 a1.6,1.6 0 0 0 1.6,1.6 h15.2 a1.6,1.6 0 0 0 1.6,-1.6 V131"/>
<path fill="none" stroke="#3c8fca" stroke-width="2" stroke-linecap="round" stroke-linejoin="round" d="M693,144.4 v-6.8 h6.6 v6.8"/>
<path fill="none" stroke="#3f4144" stroke-width="2.1" stroke-linecap="round" stroke-linejoin="round" d="M729.8,127.4 l8,7.8 l-8,7.8"/>
<path fill="none" stroke="#34383c" stroke-width="2" stroke-linecap="round" stroke-linejoin="round" d="M893.5,185.2 H888 a3,3 0 0 0 -3,3 V198.4 a3,3 0 0 0 3,3 H899 a3,3 0 0 0 3,-3 V194"/>
<path fill="none" stroke="#34383c" stroke-width="2" stroke-linecap="round" stroke-linejoin="round" fill="#fff" d="M889.6,197.6 l1.4,-4.6 L902.4,181.6 a2.2,2.2 0 0 1 3.1,3.1 L894.1,196.1 Z"/>
<path fill="none" stroke="#34383c" stroke-width="2" stroke-linecap="round" stroke-linejoin="round" d="M959.2,186.6 H956 a2.2,2.2 0 0 0 -2.2,2.2 V200.2 a2.2,2.2 0 0 0 2.2,2.2 H964.6 a2.2,2.2 0 0 0 2.2,-2.2 V197.6"/>
<path fill="none" stroke="#34383c" stroke-width="2" stroke-linecap="round" stroke-linejoin="round" d="M959.8,183 a2.2,2.2 0 0 1 2.2,-2.2 h4.6 l5.9,6.2 V195 a2.2,2.2 0 0 1 -2.2,2.2 h-8.3 a2.2,2.2 0 0 1 -2.2,-2.2 z M966.6,180.8 v4 a2.2,2.2 0 0 0 2.2,2.2 h3.7"/>
<path fill="none" stroke="#34383c" stroke-width="2" stroke-linecap="round" stroke-linejoin="round" d="M1017.3,184.6 a3.8,3.8 0 0 1 3.8,-3.8 h4.3 a3,3 0 0 1 2.2,0.9 l1.9,2 a3,3 0 0 0 2.2,0.9 h5.4 a3.8,3.8 0 0 1 3.8,3.8 v10.3 a3.8,3.8 0 0 1 -3.8,3.8 h-16 a3.8,3.8 0 0 1 -3.8,-3.8 z"/>
<path fill="none" stroke="#34383c" stroke-width="2" stroke-linecap="round" stroke-linejoin="round" d="M1025.2,193.6 h7.8 M1030,190.4 l3.2,3.2 l-3.2,3.2"/>
<path fill="none" stroke="#34383c" stroke-width="2" stroke-linecap="round" stroke-linejoin="round" d="M1097.3,181 V196.2 M1091.3,190.6 l6,5.8 l6,-5.8"/>
<path fill="none" stroke="#34383c" stroke-width="2" stroke-linecap="round" stroke-linejoin="round" d="M1087,197 v2.2 a2.4,2.4 0 0 0 2.4,2.4 h15.8 a2.4,2.4 0 0 0 2.4,-2.4 V197"/>
<rect fill="none" stroke="#34383c" stroke-width="2" stroke-linecap="round" stroke-linejoin="round" x="1152.3" y="182.3" width="22" height="4" rx="1.2"/>
<path fill="none" stroke="#34383c" stroke-width="2" stroke-linecap="round" stroke-linejoin="round" d="M1154.2,186.3 l0.9,12 a2.3,2.3 0 0 0 2.3,2.1 h11.8 a2.3,2.3 0 0 0 2.3,-2.1 l0.9,-12 M1160.4,190.8 h5.6"/>
<path fill="none" stroke="#34383c" stroke-width="2" stroke-linecap="round" stroke-linejoin="round" d="M1220,202.8 l1.6,-5.2 L1238.2,181 a2.5,2.5 0 0 1 3.6,3.6 L1225.2,201.2 Z M1236.4,182.9 l3.5,3.5"/>
<path fill="none" stroke="#34383c" stroke-width="2" stroke-linecap="round" stroke-linejoin="round" d="M1288.2,184.2 h18.4 M1293.6,184 c0.2,-2.4 1.3,-3.4 3.8,-3.4 c2.5,0 3.6,1 3.8,3.4 M1289.6,184.4 l1.4,15.8 a2.4,2.4 0 0 0 2.4,2.2 h8 a2.4,2.4 0 0 0 2.4,-2.2 l1.4,-15.8 M1294.8,188.8 l0.4,9.6 M1300.4,188.8 l-0.4,9.6"/>
<circle cx="1365.3" cy="184.4" r="1.8" fill="#34383c"/>
<circle cx="1365.3" cy="191.5" r="1.8" fill="#34383c"/>
<circle cx="1365.3" cy="198.5" r="1.8" fill="#34383c"/>
<path fill="#4aa0da" d="M755.1,337.4 a3,3 0 0 1 3,-3 h11.6 a3.4,3.4 0 0 1 2.4,1 l3.6,3.6 v6 h-20.6 z"/>
<path fill="#5cb8f5" d="M755.1,342.4 a3.2,3.2 0 0 1 3.2,-3.2 h36.9 a3.2,3.2 0 0 1 3.2,3.2 v23.6 a3.2,3.2 0 0 1 -3.2,3.2 h-36.9 a3.2,3.2 0 0 1 -3.2,-3.2 z"/>
<path fill="#4aa0da" d="M755.1,407.0 a3,3 0 0 1 3,-3 h11.6 a3.4,3.4 0 0 1 2.4,1 l3.6,3.6 v6 h-20.6 z"/>
<path fill="#5cb8f5" d="M755.1,412.0 a3.2,3.2 0 0 1 3.2,-3.2 h36.9 a3.2,3.2 0 0 1 3.2,3.2 v23.6 a3.2,3.2 0 0 1 -3.2,3.2 h-36.9 a3.2,3.2 0 0 1 -3.2,-3.2 z"/>
<path fill="#e9e8e1" d="M756.8,465.3 h28 l12,12 v24.4 h-40 z"/>
<path fill="#d9d8cc" d="M784.8,465.3 l12,12 h-12 z"/>
<path fill="#e9612f" d="M756.8,501.7 h40 v14.2 a1.2,1.2 0 0 1 -1.2,1.2 h-37.6 a1.2,1.2 0 0 1 -1.2,-1.2 z"/>
<path fill="none" stroke="#e9612f" stroke-width="2" stroke-linecap="round" stroke-linejoin="round" d="M772.0,480.7 l-6.2,5.9 l6.2,5.9 M782.2,480.7 l6.2,5.9 l-6.2,5.9"/>
<path fill="#e9e8e1" d="M756.8,534.9 h28 l12,12 v24.4 h-40 z"/>
<path fill="#d9d8cc" d="M784.8,534.9 l12,12 h-12 z"/>
<path fill="#95a5a6" d="M756.8,571.3 h40 v14.2 a1.2,1.2 0 0 1 -1.2,1.2 h-37.6 a1.2,1.2 0 0 1 -1.2,-1.2 z"/>
<rect x="761.2" y="545.1" width="7.1" height="1.9" fill="#d2d0c5"/>
<rect x="761.2" y="549.8" width="30.6" height="1.9" fill="#d2d0c5"/>
<rect x="761.2" y="554.4" width="30.6" height="1.9" fill="#d2d0c5"/>
<rect x="761.2" y="559.1" width="30.6" height="1.9" fill="#d2d0c5"/>
<rect x="761.2" y="563.7" width="12.6" height="1.9" fill="#d2d0c5"/>
<path fill="#e9e8e1" d="M756.8,604.5 h28 l12,12 v24.4 h-40 z"/>
<path fill="#d9d8cc" d="M784.8,604.5 l12,12 h-12 z"/>
<path fill="#95a5a6" d="M756.8,640.9 h40 v14.2 a1.2,1.2 0 0 1 -1.2,1.2 h-37.6 a1.2,1.2 0 0 1 -1.2,-1.2 z"/>
<rect x="761.2" y="614.7" width="7.1" height="1.9" fill="#d2d0c5"/>
<rect x="761.2" y="619.4" width="30.6" height="1.9" fill="#d2d0c5"/>
<rect x="761.2" y="624.0" width="30.6" height="1.9" fill="#d2d0c5"/>
<rect x="761.2" y="628.7" width="30.6" height="1.9" fill="#d2d0c5"/>
<rect x="761.2" y="633.3" width="12.6" height="1.9" fill="#d2d0c5"/>
<path fill="#e9e8e1" d="M756.8,674.2 h28 l12,12 v24.4 h-40 z"/>
<path fill="#d9d8cc" d="M784.8,674.2 l12,12 h-12 z"/>
<path fill="#95a5a6" d="M756.8,710.6 h40 v14.2 a1.2,1.2 0 0 1 -1.2,1.2 h-37.6 a1.2,1.2 0 0 1 -1.2,-1.2 z"/>
<rect x="761.2" y="684.4" width="7.1" height="1.9" fill="#d2d0c5"/>
<rect x="761.2" y="689.0" width="30.6" height="1.9" fill="#d2d0c5"/>
<rect x="761.2" y="693.7" width="30.6" height="1.9" fill="#d2d0c5"/>
<rect x="761.2" y="698.3" width="30.6" height="1.9" fill="#d2d0c5"/>
<rect x="761.2" y="703.0" width="12.6" height="1.9" fill="#d2d0c5"/>
<path fill="#e9e8e1" d="M756.8,743.8 h28 l12,12 v24.4 h-40 z"/>
<path fill="#d9d8cc" d="M784.8,743.8 l12,12 h-12 z"/>
<path fill="#95a5a6" d="M756.8,780.2 h40 v14.2 a1.2,1.2 0 0 1 -1.2,1.2 h-37.6 a1.2,1.2 0 0 1 -1.2,-1.2 z"/>
<rect x="761.2" y="754.0" width="7.1" height="1.9" fill="#d2d0c5"/>
<rect x="761.2" y="758.6" width="30.6" height="1.9" fill="#d2d0c5"/>
<rect x="761.2" y="763.3" width="30.6" height="1.9" fill="#d2d0c5"/>
<rect x="761.2" y="767.9" width="30.6" height="1.9" fill="#d2d0c5"/>
<rect x="761.2" y="772.6" width="12.6" height="1.9" fill="#d2d0c5"/>
<path fill="#e9e8e1" d="M756.8,813.4 h28 l12,12 v24.4 h-40 z"/>
<path fill="#d9d8cc" d="M784.8,813.4 l12,12 h-12 z"/>
<path fill="#95a5a6" d="M756.8,849.8 h40 v14.2 a1.2,1.2 0 0 1 -1.2,1.2 h-37.6 a1.2,1.2 0 0 1 -1.2,-1.2 z"/>
<rect x="761.2" y="823.6" width="7.1" height="1.9" fill="#d2d0c5"/>
<rect x="761.2" y="828.3" width="30.6" height="1.9" fill="#d2d0c5"/>
<rect x="761.2" y="832.9" width="30.6" height="1.9" fill="#d2d0c5"/>
<rect x="761.2" y="837.6" width="30.6" height="1.9" fill="#d2d0c5"/>
<rect x="761.2" y="842.2" width="12.6" height="1.9" fill="#d2d0c5"/>
<path fill="#e9e8e1" d="M756.8,883.1 h28 l12,12 v25.2 h-40 z"/>
<path fill="#d9d8cc" d="M784.8,883.1 l12,12 h-12 z"/>
<path fill="#bfb6b1" d="M756.8,920.3 h40 v13.4 a1.2,1.2 0 0 1 -1.2,1.2 h-37.6 a1.2,1.2 0 0 1 -1.2,-1.2 z"/>
<circle cx="767.7" cy="927.5" r="2.6" fill="#fff"/>
<circle cx="777.2" cy="927.5" r="2.6" fill="#fff"/>
<circle cx="786.6" cy="927.5" r="2.6" fill="#fff"/>
<path fill="#e9e8e1" d="M756.8,952.7 h28 l12,12 v25.2 h-40 z"/>
<path fill="#d9d8cc" d="M784.8,952.7 l12,12 h-12 z"/>
<path fill="#bfb6b1" d="M756.8,989.9 h40 v13.4 a1.2,1.2 0 0 1 -1.2,1.2 h-37.6 a1.2,1.2 0 0 1 -1.2,-1.2 z"/>
<circle cx="767.7" cy="997.1" r="2.6" fill="#fff"/>
<circle cx="777.2" cy="997.1" r="2.6" fill="#fff"/>
<circle cx="786.6" cy="997.1" r="2.6" fill="#fff"/>
<path fill="none" stroke="#1f6fa9" stroke-width="2.4" stroke-linecap="round" stroke-linejoin="round" d="M688.3,979.2 l8.2,8.4 l12.4,-18.4"/>
<path fill="#e9e8e1" d="M756.8,1022.3 h28 l12,12 v25.2 h-40 z"/>
<path fill="#d9d8cc" d="M784.8,1022.3 l12,12 h-12 z"/>
<path fill="#bfb6b1" d="M756.8,1059.5 h40 v13.4 a1.2,1.2 0 0 1 -1.2,1.2 h-37.6 a1.2,1.2 0 0 1 -1.2,-1.2 z"/>
<circle cx="767.7" cy="1066.7" r="2.6" fill="#fff"/>
<circle cx="777.2" cy="1066.7" r="2.6" fill="#fff"/>
<circle cx="786.6" cy="1066.7" r="2.6" fill="#fff"/></svg>
<span class="t" style="left:758.87px;top:505.00px;font-size:12.4px;color:#fff;letter-spacing:0.326px;font-weight:700;">HTML</span>
<span class="t" style="left:764.11px;top:574.00px;font-size:12.8px;color:#fff;letter-spacing:0.103px;">TXT</span>
<span class="t" style="left:764.11px;top:644.00px;font-size:12.8px;color:#fff;letter-spacing:0.103px;">TXT</span>
<span class="t" style="left:764.11px;top:713.00px;font-size:12.8px;color:#fff;letter-spacing:0.103px;">TXT</span>
<span class="t" style="left:764.11px;top:783.00px;font-size:12.8px;color:#fff;letter-spacing:0.103px;">TXT</span>
<span class="t" style="left:764.11px;top:853.00px;font-size:12.8px;color:#fff;letter-spacing:0.103px;">TXT</span>
<div class="b" style="left:857.2px;top:153.4px;width:74.6px;height:83.2px;box-sizing:border-box;border:5.4px solid #ea4b48;box-shadow:0 0 0 1.6px rgba(255,255,255,0.9), inset 0 0 0 1.6px rgba(255,255,255,0.9);"></div>
<div class="b" style="left:650.0px;top:935.4px;width:517.6px;height:84.6px;box-sizing:border-box;border:5.4px solid #ea4b48;box-shadow:0 0 0 1.6px rgba(255,255,255,0.9), inset 0 0 0 1.6px rgba(255,255,255,0.9);"></div>
<div class="b" style="left:786.4px;top:158.6px;width:56px;height:56px;border-radius:28px;background:#ea4b48;"></div>
<div class="b" style="left:569.0px;top:946.6px;width:56px;height:56px;border-radius:28px;background:#ea4b48;"></div>
<span class="t" style="left:803.72px;top:167.00px;font-size:37px;color:#fff;font-weight:700;">2</span>
<svg class="ov" viewBox="0 0 2560 1223"><path fill="#fff" d="M600.1,960.9 V986.1 H593.9 V968.9 H588.9 V964.8 C592.3,964.7 594.6,963.4 595.5,960.9 Z"/></svg>
</body></html>
